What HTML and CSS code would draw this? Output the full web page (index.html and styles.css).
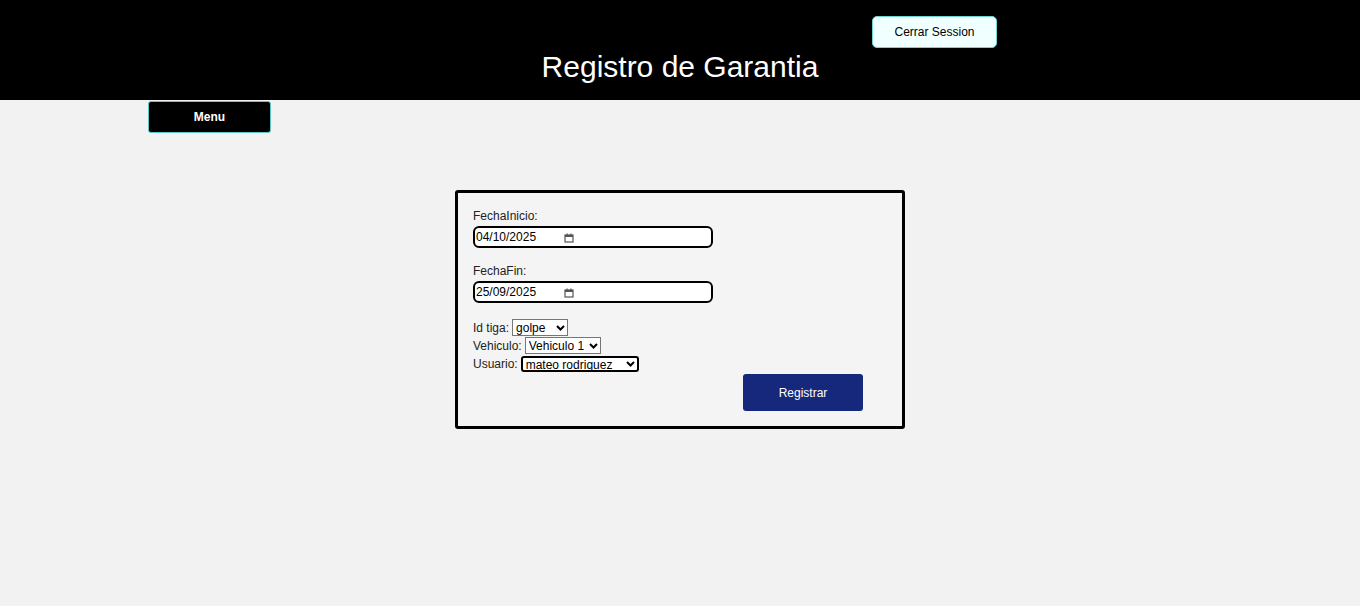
FILE: index.html
```html
<!DOCTYPE html>
<html lang="es">
<head>
<meta charset="utf-8">
<title>Registro de Garantia</title>
<link rel="stylesheet" href="styles.css">
</head>
<body>
<header class="header">
  <div class="top-row">
    <button class="logout" type="button">Cerrar Session</button>
  </div>
  <h1 class="title">Registro de Garantia</h1>
</header>
<nav class="nav">
  <button class="menu" type="button">Menu</button>
</nav>
<main class="main">
  <form class="card">
    <label class="field-label" for="fi">FechaInicio:</label>
    <div class="date-field">
      <input class="date-text" id="fi" type="text" value="04/10/2025">
      <svg class="cal" width="10" height="10" viewBox="0 0 10 10" aria-hidden="true">
        <rect x="1" y="2" width="8" height="7" fill="none" stroke="#555" stroke-width="1.2"/>
        <rect x="1" y="2" width="8" height="2" fill="#555"/>
        <rect x="2.5" y="0.5" width="1.2" height="2" fill="#555"/>
        <rect x="6.3" y="0.5" width="1.2" height="2" fill="#555"/>
      </svg>
    </div>
    <label class="field-label second" for="ff">FechaFin:</label>
    <div class="date-field">
      <input class="date-text" id="ff" type="text" value="25/09/2025">
      <svg class="cal" width="10" height="10" viewBox="0 0 10 10" aria-hidden="true">
        <rect x="1" y="2" width="8" height="7" fill="none" stroke="#555" stroke-width="1.2"/>
        <rect x="1" y="2" width="8" height="2" fill="#555"/>
        <rect x="2.5" y="0.5" width="1.2" height="2" fill="#555"/>
        <rect x="6.3" y="0.5" width="1.2" height="2" fill="#555"/>
      </svg>
    </div>
    <div class="selects">
      <div class="row">
        <label for="tiga">Id tiga:</label>
        <span class="sel-wrap">
          <select id="tiga" class="sel sel-tiga"><option>golpe</option></select>
          <svg class="chev" width="9" height="6" viewBox="0 0 9 6" aria-hidden="true"><path d="M1 1l3.5 3.5L8 1" fill="none" stroke="#000" stroke-width="2"/></svg>
        </span>
      </div>
      <div class="row">
        <label for="veh">Vehiculo:</label>
        <span class="sel-wrap">
          <select id="veh" class="sel sel-veh"><option>Vehiculo 1</option></select>
          <svg class="chev" width="9" height="6" viewBox="0 0 9 6" aria-hidden="true"><path d="M1 1l3.5 3.5L8 1" fill="none" stroke="#000" stroke-width="2"/></svg>
        </span>
      </div>
      <div class="row">
        <label for="usr">Usuario:</label>
        <span class="sel-wrap">
          <select id="usr" class="sel sel-user"><option>mateo rodriguez</option></select>
          <svg class="chev chev-user" width="9" height="6" viewBox="0 0 9 6" aria-hidden="true"><path d="M1 1l3.5 3.5L8 1" fill="none" stroke="#000" stroke-width="2"/></svg>
        </span>
      </div>
    </div>
    <div class="actions">
      <button class="submit" type="button">Registrar</button>
    </div>
  </form>
</main>
</body>
</html>
```
FILE: styles.css
```css
html, body {
  margin: 0;
  padding: 0;
}
body {
  background: #f2f2f2;
  font-family: "Liberation Sans", Arial, sans-serif;
  color: #222;
  min-height: 606px;
}
.header {
  background: #000;
  height: 100px;
  box-sizing: border-box;
  padding-top: 16px;
  display: flex;
  flex-direction: column;
  align-items: center;
}
.top-row {
  width: 100%;
  display: flex;
  justify-content: flex-end;
  padding-right: 363px;
  box-sizing: border-box;
}
.logout {
  width: 125px;
  height: 32px;
  background: #f0ffff;
  border: 1px solid #6fd6d6;
  border-radius: 5px;
  font-family: "Liberation Sans", Arial, sans-serif;
  font-size: 12px;
  color: #000;
  padding: 0;
}
.title {
  margin: 2px 0 0 0;
  font-weight: normal;
  font-size: 30px;
  line-height: 34px;
  color: #fff;
}
.nav {
  padding: 1px 0 0 148px;
}
.menu {
  width: 123px;
  height: 32px;
  background: #000;
  color: #fff;
  border: 1px solid #5fc9c9;
  border-radius: 3px;
  font-family: "Liberation Sans", Arial, sans-serif;
  font-size: 12px;
  font-weight: bold;
  padding: 0;
}
.main {
  display: flex;
  justify-content: center;
  padding-top: 57px;
}
.card {
  width: 450px;
  box-sizing: border-box;
  border: 3px solid #000;
  border-radius: 3px;
  background: #f4f4f4;
  padding: 16px 15px 15px 15px;
  display: flex;
  flex-direction: column;
  align-items: flex-start;
  font-size: 12px;
}
.field-label {
  display: block;
  line-height: 14px;
  margin-bottom: 3px;
}
.field-label.second {
  margin-top: 16px;
}
.date-field {
  width: 240px;
  height: 22px;
  box-sizing: border-box;
  border: 2px solid #000;
  border-radius: 6px;
  background: #fff;
  display: flex;
  align-items: center;
}
.date-text {
  width: 88px;
  border: none;
  background: transparent;
  padding: 0 0 0 1px;
  margin: 0;
  outline: none;
  font-family: "Liberation Sans", Arial, sans-serif;
  font-size: 12px;
  color: #000;
}
.cal {
  display: block;
  margin-top: 1px;
}
.selects {
  margin-top: 16px;
  display: flex;
  flex-direction: column;
  gap: 1px;
}
.row {
  display: flex;
  align-items: center;
  gap: 3px;
  height: 17px;
}
.sel-wrap {
  position: relative;
  display: inline-flex;
}
.sel {
  appearance: none;
  -webkit-appearance: none;
  font-family: "Liberation Sans", Arial, sans-serif;
  font-size: 12px;
  line-height: 14px;
  height: 17px;
  box-sizing: border-box;
  border: 1px solid #767676;
  border-radius: 0;
  background-color: #fff;
  color: #000;
  padding: 0 12px 0 3px;
  margin: 0;
}
.sel-tiga {
  width: 56px;
}
.sel-veh {
  width: 76px;
}
.sel-user {
  border: 2px solid #000;
  border-radius: 3px;
  width: 118px;
  height: 16px;
  padding-left: 3px;
}
.chev {
  position: absolute;
  right: 3px;
  top: 6px;
  pointer-events: none;
}
.chev-user {
  right: 4px;
  top: 5px;
}
.actions {
  align-self: stretch;
  display: flex;
  justify-content: flex-end;
  padding-right: 24px;
  margin-top: 2px;
}
.submit {
  width: 120px;
  height: 37px;
  background: #15287b;
  color: #fff;
  border: none;
  border-radius: 3px;
  font-family: "Liberation Sans", Arial, sans-serif;
  font-size: 12px;
  padding: 0;
}
```
